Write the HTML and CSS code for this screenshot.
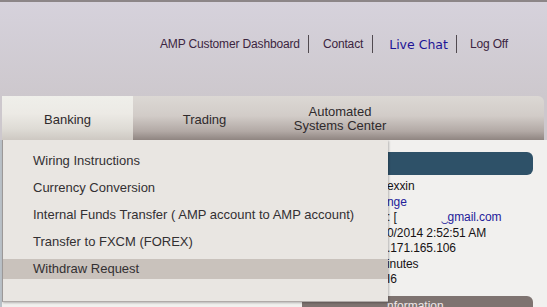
FILE: index.html
```html
<!DOCTYPE html>
<html>
<head>
<meta charset="utf-8">
<link rel="stylesheet" href="styles.css">
</head>
<body>
<div class="page">
  <header class="header">
    <nav class="toplinks">
      <a class="tl">AMP Customer Dashboard</a>
      <span class="sep"></span>
      <a class="tl">Contact</a>
      <span class="sep"></span>
      <a class="tl chat">Live Chat</a>
      <span class="sep"></span>
      <a class="tl">Log Off</a>
    </nav>
  </header>
  <div class="tabbar">
    <div class="tab active">Banking</div>
    <div class="tab">Trading</div>
    <div class="tab two">Automated<br>Systems Center</div>
  </div>
  <main class="main">
    <div class="edge"></div>
    <section class="panel">
      <div class="bluebar"></div>
      <div class="info">
        <div>exxin</div>
        <div class="link">nge</div>
        <div>:&nbsp;[<span class="mail">‿gmail.com</span></div>
        <div>0/2014 2:52:51 AM</div>
        <div>.171.165.106</div>
        <div>inutes</div>
        <div>I6</div>
      </div>
      <div class="infobar">nformation</div>
    </section>
    <ul class="dropdown">
      <li class="item">Wiring Instructions</li>
      <li class="item">Currency Conversion</li>
      <li class="item">Internal Funds Transfer ( AMP account to AMP account)</li>
      <li class="item">Transfer to FXCM (FOREX)</li>
      <li class="item hover">Withdraw Request</li>
    </ul>
  </main>
</div>
</body>
</html>
```
FILE: styles.css
```css
* { box-sizing: border-box; }
html, body { margin: 0; padding: 0; }
body {
  width: 547px;
  height: 307px;
  overflow: hidden;
  font-family: "Liberation Sans", Arial, sans-serif;
  background: #cdc8cd;
}
.page { width: 547px; height: 307px; display: flex; flex-direction: column; overflow: hidden; }
.header {
  flex: 0 0 96px;
  border-top: 2px solid #8c8688;
  background: linear-gradient(#d6d2dc, #cdc8cd);
  display: flex;
  justify-content: flex-end;
}
.toplinks {
  display: flex;
  align-items: center;
  height: 18px;
  margin-top: 33px;
  margin-right: 39px;
}
.tl {
  font-size: 12px;
  color: #3b2540;
  letter-spacing: -0.15px;
}
.tl.chat {
  font-family: "DejaVu Sans", Verdana, sans-serif;
  font-size: 12.5px;
  color: #1d1496;
  letter-spacing: 0;
}
.sep {
  width: 1px;
  height: 18px;
  background: #514a50;
  margin: 0 14px 0 8px;
}
.sep:nth-of-type(2) { margin: 0 16px 0 9px; }
.sep:nth-of-type(3) { margin: 0 13px 0 8px; }
.tabbar {
  flex: 0 0 44px;
  margin: 0 3px 0 2px;
  display: flex;
  border-radius: 0 6px 0 0;
  background: linear-gradient(#dcd8d4 0%, #d2ccc8 45%, #b2a9a5 80%, #8f8581 100%);
}
.tab {
  display: flex;
  align-items: center;
  justify-content: center;
  text-align: center;
  font-size: 13px;
  color: #2f2a2c;
  line-height: 14px;
  padding-top: 3px;
}
.tab.active {
  width: 131px;
  background: linear-gradient(#efefea 0%, #eceae5 40%, #dedbd5 75%, #cdc8c2 100%);
}
.tab:nth-child(2) { width: 143px; }
.tab.two { width: 128px; padding-top: 2px; }
.main {
  flex: 1 1 auto;
  min-height: 0;
  position: relative;
  background: #f1f0ee;
  display: flex;
  overflow: hidden;
}
.edge { width: 2px; background: #b9c0c7; }
.panel {
  flex: 1;
  padding: 12px 14px 0 300px;
  display: flex;
  flex-direction: column;
}
.bluebar {
  flex: 0 0 23px;
  background: #2e5168;
  border-radius: 0 6px 6px 0;
}
.info {
  padding: 4px 0 0 85px;
  font-size: 12px;
  line-height: 15.5px;
  color: #161214;
  letter-spacing: -0.1px;
}
.info .link { color: #24209a; }
.info .mail { color: #24209a; margin-left: 44px; }
.infobar {
  flex: 0 0 20px;
  margin-top: 8px;
  background: #7e7370;
  border-radius: 0 6px 0 0;
  color: #eee6e6;
  font-size: 12px;
  padding: 3px 0 0 85px;
}
.dropdown {
  position: absolute;
  left: 2px;
  top: 0;
  width: 386px;
  height: 162px;
  margin: 0;
  padding: 11px 0 0 0;
  list-style: none;
  background: #e9e6e2;
  border-left: 1px solid #9c9897;
  border-bottom: 1px solid #b0aaa8;
  box-shadow: 1px 1px 2px rgba(0,0,0,0.25);
  display: flex;
  flex-direction: column;
  gap: 7px;
}
.item {
  height: 20px;
  line-height: 20px;
  padding-left: 30px;
  font-size: 13px;
  color: #333032;
}
.item.hover { background: #c9c2bc; }
```
